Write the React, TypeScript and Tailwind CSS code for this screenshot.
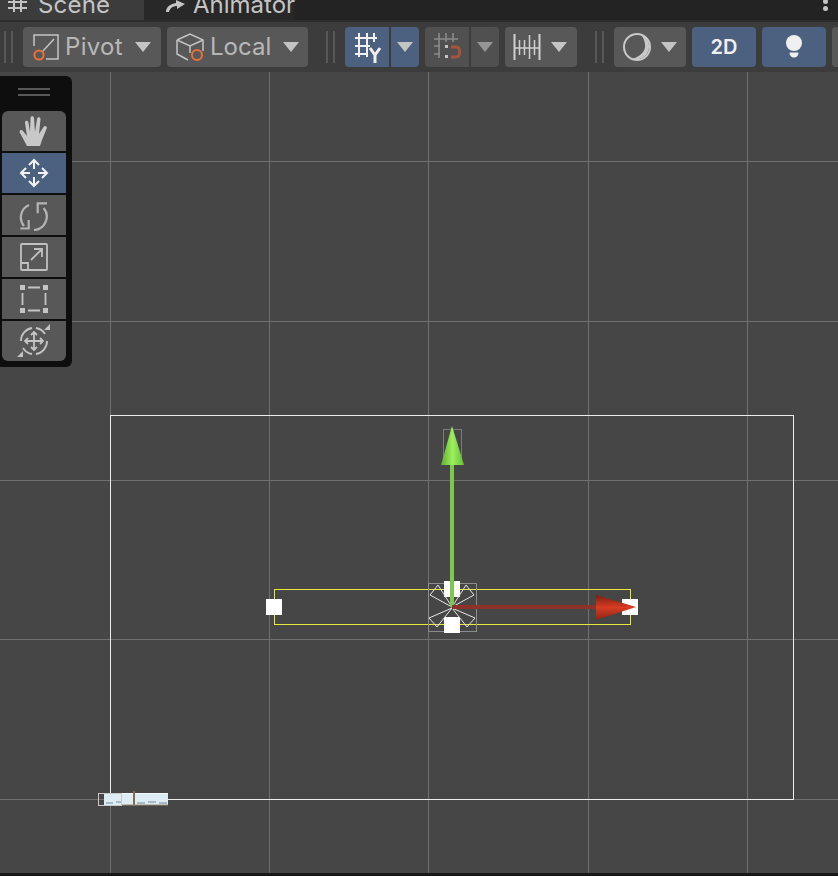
import React from 'react';

const Caret = ({ className = '' }: { className?: string }) => (
  <svg width="16" height="10" viewBox="0 0 16 10" className={className}>
    <path d="M0 0h16L8 10z" fill="#c4c4c4" />
  </svg>
);

const Grip = () => (
  <div className="flex gap-[5px] h-8 shrink-0">
    <div className="w-[2px] bg-[#585858]" />
    <div className="w-[2px] bg-[#585858]" />
  </div>
);

const PivotIcon = () => (
  <svg width="30" height="30" viewBox="0 0 30 30" fill="none" className="shrink-0">
    <path d="M3 14V3h24v24H15" stroke="#c4c4c4" strokeWidth="1.5" />
    <path d="M12 19L23 7" stroke="#c4c4c4" strokeWidth="1.5" />
    <circle cx="8" cy="23" r="4.6" stroke="#e9703a" strokeWidth="2" />
  </svg>
);

const LocalIcon = () => (
  <svg width="30" height="30" viewBox="0 0 30 30" fill="none" className="shrink-0">
    <path d="M2 8l13-6 13 6v11M2 8v14l11 6M2 8l13 6 13-6M15 14v7" stroke="#c4c4c4" strokeWidth="1.5" />
    <circle cx="22" cy="23" r="5" stroke="#e9703a" strokeWidth="2" />
  </svg>
);

const GridYIcon = () => (
  <svg width="30" height="32" viewBox="0 0 30 32" fill="none">
    <path d="M3 7h22M3 15h15M3 23h12M7 2v24M15 2v24M22 2v9" stroke="#f0f0f0" strokeWidth="2" />
    <path d="M18 17l5 7 5-7M23 24v8" stroke="#f0f0f0" strokeWidth="3" />
  </svg>
);

const SnapIcon = () => (
  <svg width="28" height="30" viewBox="0 0 28 30" fill="none">
    <path d="M1 7h24M1 14h6M1 22h6M6 1v25M13 1v9M20 1v9" stroke="#8a8a8a" strokeWidth="1.6" />
    <path d="M12 13h3v3h-3zM12 23h3v3h-3z" fill="#c4c4c4" />
    <path d="M18 15h5a3.500 3.500 0 0 1 3.500 3.500v3a3.500 3.500 0 0 1-3.500 3.500h-5" stroke="#a5533a" strokeWidth="3" />
  </svg>
);

const RulerIcon = () => (
  <svg width="28" height="28" viewBox="0 0 28 28" fill="none" stroke="#d0d0d0">
    <path d="M1.500 1v26M26.500 1v26" strokeWidth="2" />
    <path d="M6.500 7v15M11.500 7v15M16.500 2v24M21.500 7v15" strokeWidth="1.500" />
    <path d="M1 15h26" strokeWidth="1.500" />
  </svg>
);

const CircleIcon = () => (
  <svg width="30" height="30" viewBox="0 0 30 30" fill="none">
    <circle cx="15" cy="15" r="13" stroke="#c8c8c8" strokeWidth="2" />
    <path d="M19 2.500A13 13 0 0 1 9 26.500c6 0 13-5 14-11 .6-4-1-9-4-13z" fill="#c8c8c8" />
  </svg>
);

const BulbIcon = () => (
  <svg width="18" height="24" viewBox="0 0 18 24">
    <circle cx="9" cy="8" r="8" fill="#f0f0f0" />
    <path d="M4.500 17.500h9c0 3-2 5-4.500 5s-4.500-2-4.500-5z" fill="#f0f0f0" />
  </svg>
);

const HandIcon = () => (
  <svg width="30" height="32" viewBox="0 0 30 32" fill="#c8c8c8">
    <path d="M8 31L1 18c-1.500-2.500 1.500-4 3-2l4 5-2-13c-.4-2.500 3-3 3.500-.5L11 17l.5-14c0-2.500 3.500-2.500 3.500 0l1 14 2-13c.4-2.500 3.800-2 3.500.5L20 19l4.500-7c1.500-2 4-.5 3.200 1.500L23 25l-2 6z" />
  </svg>
);

const MoveIcon = () => (
  <svg width="32" height="32" viewBox="0 0 32 32" fill="none" stroke="#f2f2f2" strokeWidth="2">
    <path d="M16 3v9M11 8l5-5 5 5M16 20v9M11 24l5 5 5-5M3 16h9M8 11l-5 5 5 5M20 16h9M24 11l5 5-5 5" />
  </svg>
);

const RotateIcon = () => (
  <svg width="30" height="32" viewBox="0 0 30 32" fill="none" stroke="#b4b4b4" strokeWidth="2.200">
    <path d="M10 6A13.500 13.500 0 0 0 5 27" />
    <path d="M24.700 9A13.500 13.500 0 0 1 15 31" />
    <path d="M1.300 29.500h8.400V21M28 4.300h-9.300V14.300" />
  </svg>
);

const ScaleIcon = () => (
  <svg width="30" height="30" viewBox="0 0 30 30" fill="none" stroke="#c0c0c0" strokeWidth="1.800">
    <rect x="2" y="2" width="26" height="26" rx="1" />
    <path d="M2 21h7v7M12 18L23 7M15 7h8v8" />
  </svg>
);

const RectIcon = () => (
  <svg width="30" height="30" viewBox="0 0 30 30" fill="none">
    <path d="M1 1h5v5H1zM24 1h5v5h-5zM1 24h5v5H1zM24 24h5v5h-5z" fill="#c4c4c4" />
    <path d="M9 3.500h12M9 26.500h12M3.500 9v12M26.500 9v12" stroke="#c4c4c4" strokeWidth="1.800" />
  </svg>
);

const TransformIcon = () => (
  <svg width="34" height="34" viewBox="0 0 34 34" fill="none" stroke="#c4c4c4" strokeWidth="1.800">
    <path d="M4 17A13 13 0 0 1 15 4M19 4a13 13 0 0 1 9 6M30 17a13 13 0 0 1-11 13M15 30a13 13 0 0 1-9-6" />
    <path d="M17 8v18M8 17h18M14 11l3-3 3 3M14 23l3 3 3-3M11 14l-3 3 3 3M23 14l3 3-3 3" />
    <path d="M33 0v6h-6zM0 33h6v-6z" fill="#c4c4c4" stroke="none" />
  </svg>
);

const tools = [
  { icon: <HandIcon />, cls: 'bg-[#585858] rounded-t-[6px] mb-[2px]' },
  { icon: <MoveIcon />, cls: 'bg-[#4c607f] mb-[2px]' },
  { icon: <RotateIcon />, cls: 'bg-[#585858] mb-[2px]' },
  { icon: <ScaleIcon />, cls: 'bg-[#585858] mb-[2px]' },
  { icon: <RectIcon />, cls: 'bg-[#585858] mb-[2px]' },
  { icon: <TransformIcon />, cls: 'bg-[#585858] rounded-b-[6px]' },
];

// the gizmo and grid, in page coordinates offset by the toolbar bottom
const SceneDrawing = () => (
  <svg width="838" height="801" viewBox="0 72 838 801" className="block">
    <defs>
      <linearGradient id="green" x1="0" y1="0" x2="1" y2="0">
        <stop offset="0" stopColor="#5fae2f" />
        <stop offset="0.5" stopColor="#9bef5c" />
        <stop offset="1" stopColor="#69bd38" />
      </linearGradient>
      <linearGradient id="red" x1="0" y1="0" x2="0" y2="1">
        <stop offset="0" stopColor="#7a1f12" />
        <stop offset="0.5" stopColor="#d83c24" />
        <stop offset="1" stopColor="#8a2414" />
      </linearGradient>
    </defs>
    <g stroke="#6f6f6f" strokeWidth="1">
      {[110.5, 269.5, 428.5, 588.5, 747.5].map((x) => (
        <line key={x} x1={x} y1="72" x2={x} y2="873" />
      ))}
      {[161.5, 321.5, 480.5, 639.5, 799.5].map((y) => (
        <line key={y} x1="0" y1={y} x2="838" y2={y} />
      ))}
    </g>
    <rect x="110.500" y="415.500" width="683" height="384" fill="none" stroke="#ececec" />
    <rect x="274.500" y="589.500" width="356" height="35" fill="none" stroke="#e8e83a" />

    {/* bounding boxes of gizmo */}
    <rect x="443.500" y="429.500" width="18" height="35" fill="none" stroke="#7c7c7c" />
    <rect x="428.500" y="583.500" width="48" height="48" fill="none" stroke="#8c8c8c" />

    {/* handles */}
    <rect x="266" y="599" width="16" height="16" fill="#fff" />
    <rect x="622" y="599" width="16" height="16" fill="#fff" />
    <rect x="444" y="581" width="16" height="16" fill="#fff" />
    <rect x="444" y="617" width="16" height="16" fill="#fff" />

    {/* anchor flower */}
    <path d="M452 607l-22-12 8-10 14 22zM452 607l22-12-8-10-14 22zM452 608l-23 10 8 9 15-19zM452 608l23 10-8 9-15-19z" fill="none" stroke="#e6e6e6" strokeWidth="1" />

    {/* arrows */}
    <rect x="450" y="460" width="4" height="147" fill="#7dc850" />
    <path d="M452 426l12 39h-23z" fill="url(#green)" />
    <rect x="452" y="605" width="150" height="4" fill="#8e3128" />
    <path d="M636 607l-40 13v-25z" fill="url(#red)" />

    {/* tiny text sprite at the canvas corner */}
    <rect x="104" y="793" width="64" height="12" fill="#dcedf5" />
    <path d="M104 793.500h64" stroke="#f4f8fa" strokeWidth="1" />
    <path d="M106 803h7M116 802h6M137 803h8M148 802h8M159 803h8" stroke="#a8bac4" strokeWidth="2" />
    <rect x="133" y="791" width="2" height="15" fill="#8a6a44" />
    <path d="M122 805h46" stroke="#9a8a70" strokeWidth="1" />
    <rect x="98.500" y="793.500" width="23" height="12" fill="none" stroke="#c8c8c8" />
  </svg>
);

export default function App() {
  return (
    <div
      className="relative w-[838px] h-[876px] overflow-hidden bg-[#464646] text-[#c4c4c4]"
      style={{ fontFamily: '"Inter", "Liberation Sans", sans-serif' }}
    >
      {/* tabs */}
      <div className="flex h-5 bg-[#232323] overflow-hidden">
        <div className="w-[144px] h-5 bg-[#3c3c3c] flex items-start pl-2 gap-[11px]">
          <svg width="19" height="12" viewBox="0 0 19 12" fill="none" stroke="#c4c4c4" strokeWidth="2" className="shrink-0">
            <path d="M6 0v12M13 0v12M0 2h19M0 8h19" />
          </svg>
          <span className="text-[24px] leading-[24px] -mt-[7px] tracking-[0.2px]">Scene</span>
        </div>
        <div className="w-[150px] h-5 bg-[#282828] flex items-start pl-[22px] gap-[8px]">
          <svg width="20" height="12" viewBox="0 0 20 12" fill="#c4c4c4" className="shrink-0">
            <path d="M0 12c0-5 4-8 10-9V0l9 4-8 5V6c-4 0-7 2-8 6z" />
          </svg>
          <span className="text-[24px] leading-[24px] -mt-[7px] -ml-[1px]">Animator</span>
        </div>
        <div className="flex-1 flex justify-end pr-[10px]">
          <div className="flex flex-col gap-[2px] -mt-[1px]">
            <div className="w-[5px] h-[5px] rounded-full bg-[#c4c4c4]" />
            <div className="w-[5px] h-[5px] rounded-full bg-[#c4c4c4]" />
          </div>
        </div>
      </div>

      {/* toolbar */}
      <div className="flex items-center h-[52px] bg-[#3c3c3c] pl-[4px] border-t-2 border-[#2c2c2c]">
        <Grip />
        <div className="w-[10px] shrink-0" />
        <div className="w-[138px] h-10 rounded-[4px] bg-[#585858] flex items-center pl-2 shrink-0">
          <PivotIcon />
          <span className="ml-[4px] text-[24px] tracking-[0.3px] text-[#b8b8b8]">Pivot</span>
          <Caret className="ml-[12px]" />
        </div>
        <div className="w-[141px] h-10 ml-[6px] rounded-[4px] bg-[#585858] flex items-center pl-2 shrink-0">
          <LocalIcon />
          <span className="ml-[5px] text-[24px] text-[#b8b8b8]">Local</span>
          <Caret className="ml-[12px]" />
        </div>
        <div className="w-[18px] shrink-0" />
        <Grip />
        <div className="w-[10px] shrink-0" />
        <div className="w-[44px] h-10 rounded-l-[4px] bg-[#4c607f] flex items-center justify-center shrink-0">
          <GridYIcon />
        </div>
        <div className="w-[28px] h-10 ml-[2px] rounded-r-[4px] bg-[#4c607f] flex items-center justify-center shrink-0">
          <Caret />
        </div>
        <div className="w-[44px] h-10 ml-[6px] rounded-l-[4px] bg-[#505050] flex items-center justify-center shrink-0">
          <SnapIcon />
        </div>
        <div className="w-[28px] h-10 ml-[2px] rounded-r-[4px] bg-[#505050] flex items-center justify-center shrink-0">
          <Caret className="opacity-60" />
        </div>
        <div className="w-[72px] h-10 ml-[6px] rounded-[4px] bg-[#585858] flex items-center pl-2 gap-[10px] shrink-0">
          <RulerIcon />
          <Caret />
        </div>
        <div className="w-[18px] shrink-0" />
        <Grip />
        <div className="w-[10px] shrink-0" />
        <div className="w-[72px] h-10 rounded-[4px] bg-[#585858] flex items-center pl-2 gap-[9px] shrink-0">
          <CircleIcon />
          <Caret />
        </div>
        <div className="w-[64px] h-10 ml-[6px] rounded-[4px] bg-[#4c607f] flex items-center justify-center shrink-0 text-[20px] font-semibold text-[#f0f0f0]">
          2D
        </div>
        <div className="w-[64px] h-10 ml-[6px] rounded-[4px] bg-[#4c607f] flex items-center justify-center shrink-0">
          <BulbIcon />
        </div>
        <div className="w-[20px] h-10 ml-[6px] rounded-l-[4px] bg-[#585858] shrink-0" />
      </div>

      {/* scene canvas */}
      <SceneDrawing />
      <div className="h-[3px] bg-[#191919]" />

      {/* tools overlay */}
      <div className="absolute left-0 top-[76px] w-[72px] h-[291px] bg-[#0e0e0e] rounded-r-[6px] pl-[2px] pt-[9px]">
        <div className="flex flex-col items-center w-[64px] h-[26px] gap-[4px] pt-[3px]">
          <div className="w-8 h-[2px] bg-[#585858]" />
          <div className="w-8 h-[2px] bg-[#585858]" />
        </div>
        {tools.map((t, i) => (
          <div key={i} className={`w-[64px] h-10 flex items-center justify-center ${t.cls}`}>
            {t.icon}
          </div>
        ))}
      </div>
    </div>
  );
}
